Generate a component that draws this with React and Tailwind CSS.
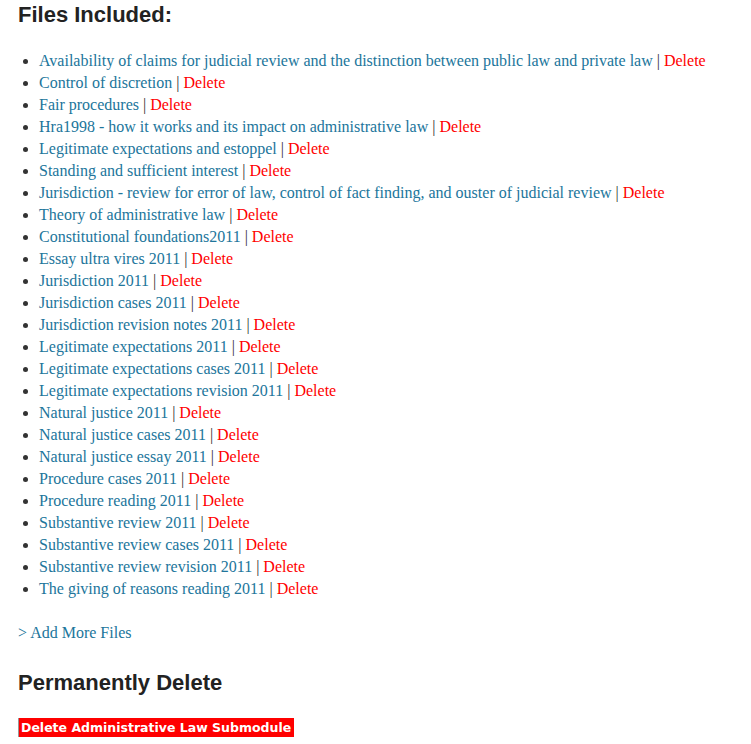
const files = [
  'Availability of claims for judicial review and the distinction between public law and private law',
  'Control of discretion',
  'Fair procedures',
  'Hra1998 - how it works and its impact on administrative law',
  'Legitimate expectations and estoppel',
  'Standing and sufficient interest',
  'Jurisdiction - review for error of law, control of fact finding, and ouster of judicial review',
  'Theory of administrative law',
  'Constitutional foundations2011',
  'Essay ultra vires 2011',
  'Jurisdiction 2011',
  'Jurisdiction cases 2011',
  'Jurisdiction revision notes 2011',
  'Legitimate expectations 2011',
  'Legitimate expectations cases 2011',
  'Legitimate expectations revision 2011',
  'Natural justice 2011',
  'Natural justice cases 2011',
  'Natural justice essay 2011',
  'Procedure cases 2011',
  'Procedure reading 2011',
  'Substantive review 2011',
  'Substantive review cases 2011',
  'Substantive review revision 2011',
  'The giving of reasons reading 2011',
]

export default function App() {
  return (
    <div className="min-h-screen bg-white px-[18px] pt-px">
      {/* Files list */}
      <h2 className="text-[22px] leading-[28px] font-bold text-[#222] font-['Liberation_Sans',Arial,sans-serif]">
        Files Included:
      </h2>

      <ul className="mt-[21px] list-disc pl-[21px] text-[16px] leading-[22px] text-[#333] font-['Liberation_Serif','Times_New_Roman',serif]">
        {files.map((name) => (
          <li key={name} className="whitespace-nowrap">
            <a href="#" className="text-[#21759b]">{name}</a>
            <span className="text-[#333]">{' | '}</span>
            <a href="#" className="text-[#ff0000]">Delete</a>
          </li>
        ))}
      </ul>

      <p className="mt-[22px] text-[16px] leading-[22px] font-['Liberation_Serif','Times_New_Roman',serif]">
        <a href="#" className="text-[#21759b]">&gt; Add More Files</a>
      </p>

      {/* Permanently delete */}
      <h2 className="mt-[25px] text-[22px] leading-[28px] font-bold text-[#222] font-['Liberation_Sans',Arial,sans-serif]">
        Permanently Delete
      </h2>

      <button className="mt-[21px] block bg-[#ff0000] border-l border-[#999] pl-[2px] pr-[3px] h-[19px] text-[12.5px] leading-[19px] font-bold text-white font-['DejaVu_Sans',Verdana,sans-serif]">
        Delete Administrative Law Submodule
      </button>
    </div>
  )
}
